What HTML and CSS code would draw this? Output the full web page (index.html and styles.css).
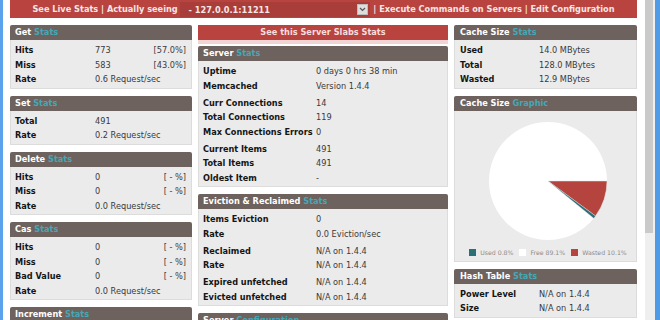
FILE: index.html
```html
<!DOCTYPE html>
<html lang="en">
  <head>
    <meta charset="utf-8" />
    <title>phpMemcachedAdmin - Live Stats</title>
    <link rel="stylesheet" href="styles.css">
  </head>
  <body>
    <div class="frame">
      <div class="edge-left"></div>

      <div class="page">
        <!-- Top menu -->
        <div class="topbar">
          See Live Stats | Actually seeing
          <span class="server-select">- 127.0.0.1:11211<span class="select-arrow"><svg width="7" height="5" viewBox="0 0 7 5"><path d="M1 1l2.5 2.5L6 1" fill="none" stroke="#555" stroke-width="1.2"/></svg></span></span>
          | Execute Commands on Servers | Edit Configuration
        </div>

        <div class="columns">
          <!-- Left column -->
          <div class="col-left">
            <div class="panel">
              <div class="panel-head">Get <span>Stats</span></div>
              <div class="panel-body">
                <div class="row"><span class="label">Hits</span><span>773</span><span>[57.0%]</span></div>
                <div class="row"><span class="label">Miss</span><span>583</span><span>[43.0%]</span></div>
                <div class="row"><span class="label">Rate</span><span>0.6 Request/sec</span><span></span></div>
              </div>
            </div>

            <div class="panel">
              <div class="panel-head">Set <span>Stats</span></div>
              <div class="panel-body">
                <div class="row"><span class="label">Total</span><span>491</span><span></span></div>
                <div class="row"><span class="label">Rate</span><span>0.2 Request/sec</span><span></span></div>
              </div>
            </div>

            <div class="panel">
              <div class="panel-head">Delete <span>Stats</span></div>
              <div class="panel-body">
                <div class="row"><span class="label">Hits</span><span>0</span><span>[ - %]</span></div>
                <div class="row"><span class="label">Miss</span><span>0</span><span>[ - %]</span></div>
                <div class="row"><span class="label">Rate</span><span>0.0 Request/sec</span><span></span></div>
              </div>
            </div>

            <div class="panel">
              <div class="panel-head">Cas <span>Stats</span></div>
              <div class="panel-body">
                <div class="row"><span class="label">Hits</span><span>0</span><span>[ - %]</span></div>
                <div class="row"><span class="label">Miss</span><span>0</span><span>[ - %]</span></div>
                <div class="row"><span class="label">Bad Value</span><span>0</span><span>[ - %]</span></div>
                <div class="row"><span class="label">Rate</span><span>0.0 Request/sec</span><span></span></div>
              </div>
            </div>

            <div class="panel">
              <div class="panel-head">Increment <span>Stats</span></div>
              <div class="panel-body">
                <div class="row"><span class="label">Hits</span><span>0</span><span>[ - %]</span></div>
              </div>
            </div>
          </div>

          <!-- Middle column -->
          <div class="col-middle">
            <div class="slabs-button">See this Server Slabs Stats</div>

            <div class="panel">
              <div class="panel-head">Server <span>Stats</span></div>
              <div class="panel-body">
                <div class="group">
                  <div class="row"><span class="label">Uptime</span><span>0 days 0 hrs 38 min</span></div>
                  <div class="row"><span class="label">Memcached</span><span>Version 1.4.4</span></div>
                </div>
                <div class="group">
                  <div class="row"><span class="label">Curr Connections</span><span>14</span></div>
                  <div class="row"><span class="label">Total Connections</span><span>119</span></div>
                  <div class="row"><span class="label">Max Connections Errors</span><span>0</span></div>
                </div>
                <div class="group">
                  <div class="row"><span class="label">Current Items</span><span>491</span></div>
                  <div class="row"><span class="label">Total Items</span><span>491</span></div>
                  <div class="row"><span class="label">Oldest Item</span><span>-</span></div>
                </div>
              </div>
            </div>

            <div class="panel">
              <div class="panel-head">Eviction &amp; Reclaimed <span>Stats</span></div>
              <div class="panel-body">
                <div class="group">
                  <div class="row"><span class="label">Items Eviction</span><span>0</span></div>
                  <div class="row"><span class="label">Rate</span><span>0.0 Eviction/sec</span></div>
                </div>
                <div class="group">
                  <div class="row"><span class="label">Reclaimed</span><span>N/A on 1.4.4</span></div>
                  <div class="row"><span class="label">Rate</span><span>N/A on 1.4.4</span></div>
                </div>
                <div class="group">
                  <div class="row"><span class="label">Expired unfetched</span><span>N/A on 1.4.4</span></div>
                  <div class="row"><span class="label">Evicted unfetched</span><span>N/A on 1.4.4</span></div>
                </div>
              </div>
            </div>

            <div class="panel">
              <div class="panel-head">Server <span>Configuration</span></div>
              <div class="panel-body">
                <div class="row"><span class="label">Accepting Connections</span><span>Yes</span></div>
              </div>
            </div>
          </div>

          <!-- Right column -->
          <div class="col-right">
            <div class="panel">
              <div class="panel-head">Cache Size <span>Stats</span></div>
              <div class="panel-body">
                <div class="row"><span class="label">Used</span><span>14.0 MBytes</span></div>
                <div class="row"><span class="label">Total</span><span>128.0 MBytes</span></div>
                <div class="row"><span class="label">Wasted</span><span>12.9 MBytes</span></div>
              </div>
            </div>

            <div class="panel">
              <div class="panel-head">Cache Size <span>Graphic</span></div>
              <div class="panel-body chart-body">
                <svg class="pie" width="120" height="120" viewBox="-60 -60 120 120">
                  <circle cx="0" cy="0" r="59" fill="#ffffff"/>
                  <path d="M0 0L59 0A59 59 0 0 1 47.5 35Z" fill="#b5443f" stroke="#e4e4e4" stroke-width="0.5"/>
                  <path d="M0 0L47.5 35A59 59 0 0 1 45.7 37.3Z" fill="#2c6d76" stroke="#e4e4e4" stroke-width="0.4"/>
                </svg>
                <div class="legend">
                  <span class="legend-item"><i class="swatch used"></i>Used 0.8%</span>
                  <span class="legend-item"><i class="swatch free"></i>Free 89.1%</span>
                  <span class="legend-item"><i class="swatch wasted"></i>Wasted 10.1%</span>
                </div>
              </div>
            </div>

            <div class="panel">
              <div class="panel-head">Hash Table <span>Stats</span></div>
              <div class="panel-body">
                <div class="row"><span class="label">Power Level</span><span>N/A on 1.4.4</span></div>
                <div class="row"><span class="label">Size</span><span>N/A on 1.4.4</span></div>
              </div>
            </div>
          </div>
        </div>
      </div>

      <div class="scrollbar"><div class="thumb"></div></div>
      <div class="edge-right"></div>
    </div>
  </body>
</html>
```

FILE: styles.css
```css
/* phpMemcachedAdmin live stats */
html,
body {
  margin: 0;
  height: 100%;
  overflow: hidden;
}

body {
  font-family: "DejaVu Sans", Verdana, sans-serif;
  font-size: 8.2px;
  color: #3a3a3a;
  background: #ffffff;
}

/* Window frame */
.frame {
  display: flex;
  height: 320px;
}

.edge-left {
  width: 3px;
  background: #5aa3ec;
}

.page {
  flex: 1;
  padding: 0 8px 0 7px;
}

.scrollbar {
  width: 10px;
  background: #efefef;
}

.thumb {
  width: 8px;
  height: 233px;
  background: #cacaca;
}

.edge-right {
  width: 5px;
  background: #4f9be8;
}

/* Top menu */
.topbar {
  height: 18px;
  line-height: 18px;
  background: #b8433f;
  color: #f7e6e5;
  font-weight: bold;
  text-align: center;
  white-space: nowrap;
}

.server-select {
  display: inline-flex;
  align-items: center;
  justify-content: space-between;
  box-sizing: border-box;
  width: 190px;
  height: 15px;
  padding: 0 2px 0 8px;
  vertical-align: middle;
  background: #a93d39;
  text-align: left;
}

.select-arrow {
  display: flex;
  align-items: center;
  justify-content: center;
  width: 9px;
  height: 9px;
  background: #dedede;
  border: 1px solid #bdbdbd;
}

/* Columns */
.columns {
  display: flex;
  gap: 6px;
  margin-top: 7px;
  align-items: flex-start;
}

.col-left {
  width: 182px;
}

.col-middle {
  width: 250px;
}

.col-right {
  width: 183px;
}

/* Panels */
.panel {
  margin-bottom: 7px;
}

.panel-head {
  height: 15px;
  line-height: 15px;
  padding-left: 5px;
  background: #6d625e;
  color: #ffffff;
  font-weight: bold;
  border-radius: 2px 2px 0 0;
}

.panel-head span {
  color: #46a7b5;
}

.panel-body {
  background: #ebebeb;
  border: 1px solid #dcdcdc;
  border-top: none;
  padding: 3px 5px 1px 4px;
}

.row {
  display: grid;
  grid-template-columns: 80px 1fr auto;
  line-height: 14.5px;
  white-space: nowrap;
}

.label {
  font-weight: bold;
  color: #151515;
}

.group + .group {
  margin-top: 2.5px;
}

.col-middle .row {
  grid-template-columns: 113px 1fr;
}

.col-right .panel-head {
  padding-left: 6px;
}

.col-right .panel-body {
  padding-left: 5px;
}

.col-right .row {
  grid-template-columns: 79px 1fr;
}

/* Slabs button */
.slabs-button {
  height: 15px;
  line-height: 15px;
  background: #b8433f;
  color: #f6dedd;
  font-weight: bold;
  text-align: center;
  border-bottom: 4px solid #f1d5d4;
  margin-bottom: 2px;
}

/* Cache size graphic */
.chart-body {
  padding: 10px 0 3px 5px;
}

.pie {
  display: block;
  margin: 0 auto;
}

.legend {
  display: flex;
  justify-content: center;
  gap: 6px;
  margin-top: 7px;
  height: 10px;
  line-height: 10px;
  font-size: 6.2px;
  color: #8c8c8c;
}

.legend-item {
  display: flex;
  align-items: center;
  gap: 4px;
}

.swatch {
  display: block;
  width: 7px;
  height: 7px;
}

.swatch.used {
  background: #2b6f78;
}

.swatch.free {
  background: #ffffff;
}

.swatch.wasted {
  background: #b5443f;
}
```
